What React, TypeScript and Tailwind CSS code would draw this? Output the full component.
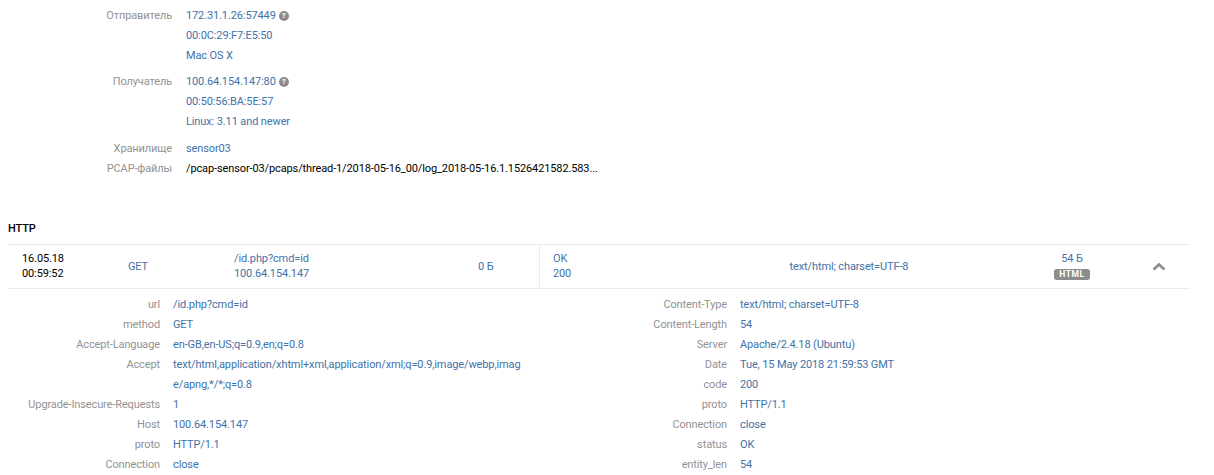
import React from "react";

const blue = "text-[#4272a8]";
const gray = "text-[#929292]";

function Help() {
  return (
    <span className="ml-[3px] inline-flex h-[10px] w-[10px] items-center justify-center rounded-full bg-[#8c8c8c] text-[8px] font-bold leading-none tracking-normal text-white">?</span>
  );
}

function Info({ label, lines, dark, help, className = "" }: { label: string; lines: string[]; dark?: boolean; help?: boolean; className?: string }) {
  return (
    <div className={`flex ${className}`}>
      <div className={`w-[172px] shrink-0 text-right ${gray}`}>{label}</div>
      <div className={`ml-[14px] ${dark ? "text-black" : blue}`}>
        {lines.map((l, i) => (
          <div key={i} className="flex h-5 items-center">
            {l}
            {help && i === 0 && <Help />}
          </div>
        ))}
      </div>
    </div>
  );
}

function KV({ k, v, w, gap }: { k: string; v: string; w: string; gap: string }) {
  return (
    <div className="flex">
      <div className={`${w} shrink-0 text-right ${gray}`}>{k}</div>
      <div className={`${gap} ${blue} break-all`}>{v}</div>
    </div>
  );
}

const left: [string, string][] = [
  ["url", "/id.php?cmd=id"],
  ["method", "GET"],
  ["Accept-Language", "en-GB,en-US;q=0.9,en;q=0.8"],
  ["Accept", "text/html,application/xhtml+xml,application/xml;q=0.9,image/webp,image/apng,*/*;q=0.8"],
  ["Upgrade-Insecure-Requests", "1"],
  ["Host", "100.64.154.147"],
  ["proto", "HTTP/1.1"],
  ["Connection", "close"],
];
const right: [string, string][] = [
  ["Content-Type", "text/html; charset=UTF-8"],
  ["Content-Length", "54"],
  ["Server", "Apache/2.4.18 (Ubuntu)"],
  ["Date", "Tue, 15 May 2018 21:59:53 GMT"],
  ["code", "200"],
  ["proto", "HTTP/1.1"],
  ["Connection", "close"],
  ["status", "OK"],
  ["entity_len", "54"],
];

export default function App() {
  return (
    <div className="h-[475px] w-[1214px] overflow-hidden bg-white pt-[6px] text-[11px] leading-5 tracking-[-0.12px] font-['Roboto',sans-serif]">
      <Info label="Отправитель" lines={["172.31.1.26:57449", "00:0C:29:F7:E5:50", "Mac OS X"]} help />
      <Info className="mt-[6px]" label="Получатель" lines={["100.64.154.147:80", "00:50:56:BA:5E:57", "Linux: 3.11 and newer"]} help />
      <Info className="mt-[7px]" label="Хранилище" lines={["sensor03"]} />
      <Info label="PCAP-файлы" lines={["/pcap-sensor-03/pcaps/thread-1/2018-05-16_00/log_2018-05-16.1.1526421582.583..."]} dark />

      <div className="mt-[40px] ml-2 font-medium text-black">HTTP</div>

      <div className="mt-[5px] ml-2 mr-6 flex h-[45px] items-stretch border-y border-[#ececec]">
        <div className="flex w-[531px] items-center pb-[1px]">
          <div className="ml-[14px] w-[106px] text-black">
            <div className="leading-[15px]">16.05.18</div>
            <div className="leading-[15px]">00:59:52</div>
          </div>
          <div className={`w-[107px] pt-[2px] ${blue}`}>GET</div>
          <div className={`w-[243px] -translate-x-px ${blue}`}>
            <div className="leading-[15px]">/id.php?cmd=id</div>
            <div className="leading-[15px]">100.64.154.147</div>
          </div>
          <div className={`pt-[2px] ${blue}`}>0 Б</div>
        </div>
        <div className="flex flex-1 items-center border-l border-[#ececec] pb-[1px]">
          <div className={`ml-[13px] w-[128px] shrink-0 ${blue}`}>
            <div className="leading-[15px]">OK</div>
            <div className="leading-[15px]">200</div>
          </div>
          <div className={`w-[336px] shrink-0 pt-[2px] text-center ${blue}`}>text/html; charset=UTF-8</div>
          <div className="ml-[37px] flex w-[36px] shrink-0 flex-col items-center">
            <div className={`leading-[15px] ${blue}`}>54 Б</div>
            <div className="mt-[3px] mb-[2px] rounded-[3px] bg-[#8c8c8c] px-[5px] text-[8.5px] font-bold leading-[11px] tracking-[0.6px] text-white">HTML</div>
          </div>
          <svg className="ml-[62px]" width="14" height="9" viewBox="0 0 14 9" fill="none">
            <path d="M1.5 7.5 L7 2.5 L12.5 7.5" stroke="#8c8c8c" strokeWidth="2.6" />
          </svg>
        </div>
      </div>

      <div className="mt-[6px] ml-2 flex">
        <div className="w-[514px] shrink-0">
          {left.map(([k, v]) => (
            <KV key={k} k={k} v={v} w="w-[152px]" gap="ml-[13px] flex-1" />
          ))}
        </div>
        <div className="ml-[9px]">
          {right.map(([k, v]) => (
            <KV key={k} k={k} v={v} w="w-[196px]" gap="ml-[13px]" />
          ))}
        </div>
      </div>
    </div>
  );
}
